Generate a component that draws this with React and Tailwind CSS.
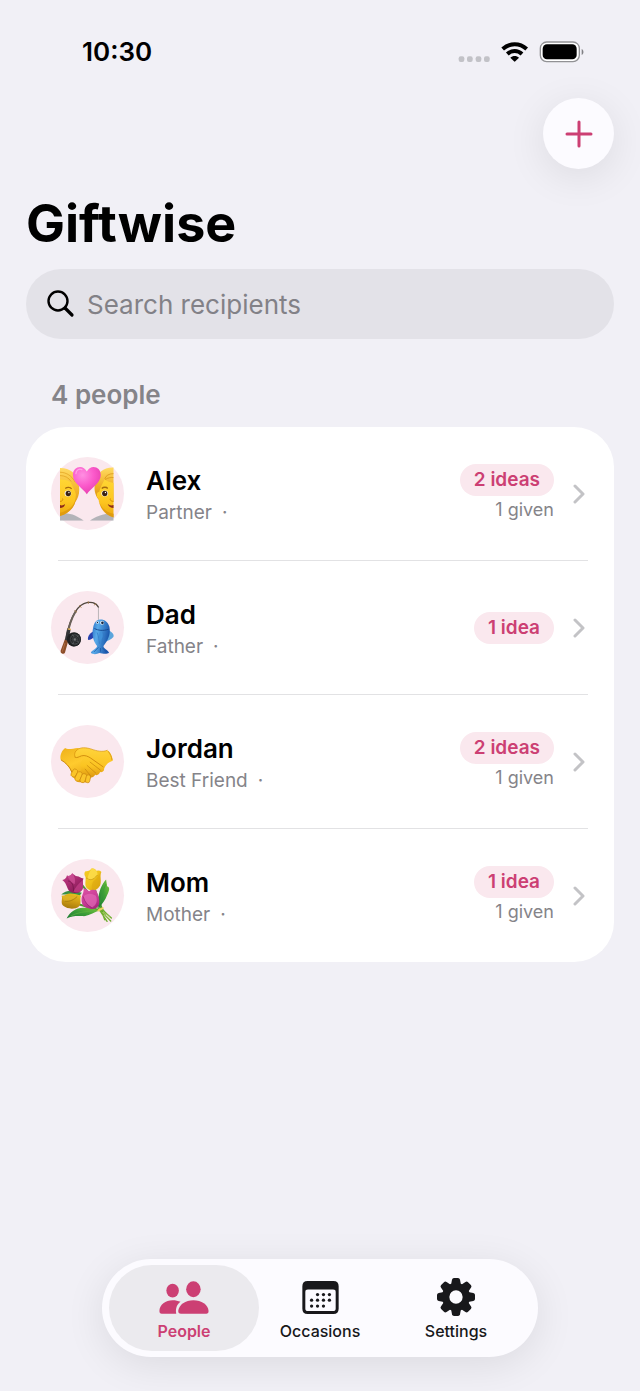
import React, { useState } from 'react';

const CoupleIcon = () => (
  <svg viewBox="33 36 220 220" className="size-full" aria-hidden="true">
    <defs>
      <linearGradient id="couple-skin" x1="0" y1="0" x2="0" y2="1">
        <stop offset="0" stopColor="#ffd634" />
        <stop offset="0.6" stopColor="#fdc51f" />
        <stop offset="1" stopColor="#e9a50f" />
      </linearGradient>
      <linearGradient id="couple-hair" x1="0" y1="0" x2="0" y2="1">
        <stop offset="0" stopColor="#ffdb62" />
        <stop offset="0.5" stopColor="#f2b32a" />
        <stop offset="1" stopColor="#d58d0d" />
      </linearGradient>
      <radialGradient id="couple-heart" cx="0.35" cy="0.3" r="0.8">
        <stop offset="0" stopColor="#ff8fe2" />
        <stop offset="0.5" stopColor="#fb5acb" />
        <stop offset="1" stopColor="#e43cab" />
      </radialGradient>
      <clipPath id="couple-clip">
        <rect x="60" y="60" width="162" height="168" />
      </clipPath>
    </defs>
    <g clipPath="url(#couple-clip)">
      <path d="M60 208 C85 200 112 214 132 228 H60 Z" fill="#b3b3b8" />
      <path d="M150 228 C166 216 186 206 222 206 V228 Z" fill="#b3b3b8" />
      <path d="M60 69 C88 68 110 84 114 112 C122 132 118 158 106 172 C100 190 84 206 60 209 Z" fill="url(#couple-hair)" />
      <path d="M60 104 C74 104 84 106 92 112 C98 124 104 134 108 148 C108 182 90 206 60 214 Z" fill="url(#couple-skin)" />
      <path d="M60 82 C78 82 96 92 106 112 M60 92 C74 92 86 98 94 110" stroke="#dd9d1b" strokeWidth="2" fill="none" />
      <path d="M60 214 C90 206 106 186 108 160 C102 184 86 198 60 204 Z" fill="#dc960c" opacity="0.7" />
      <path d="M222 68 C194 66 170 84 166 112 C162 130 164 148 176 164 L222 170 Z" fill="url(#couple-hair)" />
      <path d="M222 114 C208 112 200 108 195 103 C190 114 182 126 178 142 C170 140 168 156 176 162 C180 190 198 212 222 218 Z" fill="url(#couple-skin)" />
      <path d="M195 102 C198 92 208 86 222 86 M196 104 C206 98 214 97 222 98" stroke="#d18c14" strokeWidth="2" fill="none" />
      <path d="M222 218 C196 212 180 190 176 164 C182 188 198 202 222 208 Z" fill="#dc960c" opacity="0.7" />
      <path d="M76 131 C82 126 91 127 95 132" stroke="#a56a10" strokeWidth="4" fill="none" />
      <path d="M186 131 C191 126 200 126 204 131" stroke="#a56a10" strokeWidth="4" fill="none" />
      <ellipse cx="84" cy="146" rx="10" ry="9" fill="#fff" />
      <ellipse cx="195" cy="146" rx="10" ry="9" fill="#fff" />
      <circle cx="85" cy="146" r="8" fill="#3b2313" />
      <circle cx="195" cy="146" r="8" fill="#3b2313" />
      <circle cx="87" cy="143" r="2" fill="#fff" />
      <circle cx="197" cy="143" r="2" fill="#fff" />
      <path d="M60 170 C66 170 70 166 68 161" stroke="#d68d0c" strokeWidth="3" fill="none" />
      <path d="M222 170 C214 170 210 166 212 161" stroke="#d68d0c" strokeWidth="3" fill="none" />
      <path d="M60 181 C66 183 71 182 75 178 C75 186 68 190 60 190 Z" fill="#8c2a1b" />
      <path d="M222 181 C214 183 209 182 204 178 C206 186 214 190 222 190 Z" fill="#8c2a1b" />
    </g>
    <path d="M141 148 C130 130 99 116 99 90 C99 62 132 58 141 80 C150 58 183 62 183 90 C183 116 152 130 141 148 Z" fill="url(#couple-heart)" />
    <path d="M108 86 C109 75 118 70 126 74" stroke="#ffc4f1" strokeWidth="4" strokeLinecap="round" fill="none" opacity="0.6" />
  </svg>
);

const FishingIcon = () => (
  <svg viewBox="33 33 220 220" className="size-full" aria-hidden="true">
    <defs>
      <linearGradient id="fish-body" x1="0" y1="0" x2="1" y2="0.3">
        <stop offset="0" stopColor="#1f62bd" />
        <stop offset="0.4" stopColor="#58aae9" />
        <stop offset="1" stopColor="#1b58ad" />
      </linearGradient>
      <radialGradient id="reel">
        <stop offset="0" stopColor="#8b8d8e" />
        <stop offset="0.3" stopColor="#303336" />
        <stop offset="0.65" stopColor="#484c4f" />
        <stop offset="1" stopColor="#151719" />
      </radialGradient>
    </defs>
    <path d="M78 180 C84 138 104 82 132 71 C152 63 169 68 176 82" stroke="#51483f" strokeWidth="4" fill="none" strokeLinecap="round" />
    <path d="M81 172 C86 140 96 112 108 93" stroke="#6b625a" strokeWidth="6" fill="none" />
    <path d="M104 92 l7 5 M119 76 l5 7 M145 64 l1 7 M168 70 l-4 6" stroke="#9c7440" strokeWidth="3" />
    <path d="M176 82 V120" stroke="#999b9c" strokeWidth="2" />
    <path d="M75 178 L86 180 L75 219 Q72 224 66 221 Q61 219 62 213 Z" fill="#8c4d28" />
    <path d="M75 190 l-8 26" stroke="#ad6a43" strokeWidth="3" />
    <path d="M82 145 L92 149 L86 184 L75 180 Z" fill="#34363a" />
    <path d="M83 147 l10 2" stroke="#e5b452" strokeWidth="4" />
    <ellipse cx="102" cy="179" rx="21" ry="22" fill="#202224" />
    <ellipse cx="105" cy="179" rx="18" ry="20" fill="url(#reel)" />
    <circle cx="105" cy="179" r="11" fill="none" stroke="#202123" strokeWidth="3" />
    <path d="M97 164 l5 7 M115 167 l-4 5 M117 188 l-5 -4 M98 193 l3 -6" stroke="#6d7173" strokeWidth="2" />
    <path d="M166 151 C153 158 141 168 145 181 C152 181 161 174 168 168 Z" fill="#2842ae" />
    <path d="M200 149 C216 154 225 164 221 172 C214 181 205 183 195 187 Z" fill="#5ba5dc" />
    <path d="M180 119 C194 118 205 126 209 141 C214 167 202 185 191 199 C191 207 204 211 208 219 C200 225 187 221 179 220 C170 224 160 225 153 219 C158 210 171 207 172 199 C161 185 155 166 160 143 C163 128 170 120 180 119 Z" fill="url(#fish-body)" />
    <path d="M164 146 C175 152 190 154 207 148" stroke="#174b92" strokeWidth="3" fill="none" />
    <path d="M172 158 C177 170 178 182 179 192 M190 158 C191 170 189 181 186 194" stroke="#2f78c4" strokeWidth="2" fill="none" />
    <path d="M184 153 C177 163 175 173 180 184 C189 177 192 164 184 153 Z" fill="#3f90d8" />
    <circle cx="173" cy="128" r="4" fill="#e9f3fa" />
    <circle cx="187" cy="129" r="6" fill="#e9f3fa" />
    <circle cx="188" cy="129" r="4" fill="#182744" />
    <circle cx="173" cy="128" r="2" fill="#182744" />
    <path d="M176 203 l-14 14 M182 205 v11 M188 204 l12 13" stroke="#174f9e" strokeWidth="2" />
  </svg>
);

const HandshakeIcon = () => (
  <svg viewBox="33 28 220 220" className="size-full" aria-hidden="true">
    <defs>
      <linearGradient id="hand-left" x1="0" y1="0" x2="0.5" y2="1">
        <stop offset="0" stopColor="#eeb01b" />
        <stop offset="0.5" stopColor="#ffcb2e" />
        <stop offset="1" stopColor="#e7a312" />
      </linearGradient>
      <linearGradient id="hand-right" x1="0" y1="0" x2="0" y2="1">
        <stop offset="0" stopColor="#ffd43c" />
        <stop offset="0.6" stopColor="#fbc421" />
        <stop offset="1" stopColor="#dc9610" />
      </linearGradient>
    </defs>
    <path d="M76 97 C82 103 98 99 114 97 L152 112 L176 156 L146 196 C140 203 132 202 127 199 C115 203 108 199 105 190 C97 187 93 180 95 172 C90 158 82 146 62 132 C59 120 66 103 76 97 Z" fill="url(#hand-left)" />
    <path d="M203 104 C211 108 219 123 219 136 C204 141 197 149 193 160 C194 167 188 171 181 170 C178 178 172 181 166 178 C161 187 154 188 148 184 C143 190 136 188 131 181 C123 179 119 168 126 160 C116 151 124 134 133 125 C124 121 117 125 112 128 C104 125 103 112 112 103 C121 94 140 96 153 100 C172 107 189 110 203 104 Z" fill="url(#hand-right)" />
    <path d="M105 125 C111 129 118 123 125 121 C135 118 146 123 153 128 L190 154" fill="none" stroke="#d28d0e" strokeWidth="3" strokeLinecap="round" />
    <path d="M151 140 L182 164 M142 150 L168 173 M136 161 L153 182" fill="none" stroke="#c4820c" strokeWidth="2" strokeLinecap="round" />
    <path d="M105 124 C102 115 106 106 112 103 C121 94 140 96 153 100 C172 107 189 110 203 104" fill="none" stroke="#d6920f" strokeWidth="2" />
    <g fill="#fac52a" stroke="#cc870f" strokeWidth="2">
      <rect x="96" y="160" width="15" height="25" rx="7" transform="rotate(28 103 172)" />
      <rect x="108" y="168" width="16" height="30" rx="8" transform="rotate(26 116 183)" />
      <rect x="123" y="174" width="15" height="28" rx="7" transform="rotate(22 130 188)" />
      <rect x="138" y="178" width="13" height="24" rx="6" transform="rotate(12 144 190)" />
    </g>
    <path d="M63 133 C78 142 90 154 96 170" fill="none" stroke="#c98511" strokeWidth="3" />
    <path d="M205 107 C211 114 216 124 217 134" fill="none" stroke="#dc9a15" strokeWidth="3" />
  </svg>
);

const BouquetIcon = () => (
  <svg viewBox="33 30 220 220" className="size-full" aria-hidden="true">
    <defs>
      <linearGradient id="tulip-yellow" x1="0" y1="0" x2="1" y2="1">
        <stop offset="0" stopColor="#f3cb25" />
        <stop offset="0.5" stopColor="#efc21c" />
        <stop offset="1" stopColor="#cf9c0a" />
      </linearGradient>
      <linearGradient id="tulip-gold" x1="0.6" y1="0" x2="0.3" y2="1">
        <stop offset="0" stopColor="#e9c020" />
        <stop offset="0.5" stopColor="#cd9b14" />
        <stop offset="1" stopColor="#a4780b" />
      </linearGradient>
      <linearGradient id="tulip-plum" x1="0" y1="0" x2="0.7" y2="1">
        <stop offset="0" stopColor="#c03c86" />
        <stop offset="0.5" stopColor="#a92a70" />
        <stop offset="1" stopColor="#831b55" />
      </linearGradient>
      <linearGradient id="tulip-pink" x1="0.4" y1="0" x2="0.8" y2="1">
        <stop offset="0" stopColor="#d94fa2" />
        <stop offset="0.6" stopColor="#c43894" />
        <stop offset="1" stopColor="#a3257a" />
      </linearGradient>
      <linearGradient id="tulip-leaf" x1="0" y1="1" x2="1" y2="0">
        <stop offset="0" stopColor="#1c7a34" />
        <stop offset="0.5" stopColor="#3c9d38" />
        <stop offset="1" stopColor="#7cc93a" />
      </linearGradient>
    </defs>
    <path d="M128 110 L199 196 M165 122 L190 190 M110 165 L190 187" stroke="#4d9c30" strokeWidth="6" fill="none" />
    <path d="M175 156 C176 132 185 106 199 92 C200 101 202 106 202 112 C211 115 210 124 202 139 C197 154 187 164 176 180 Z" fill="url(#tulip-leaf)" />
    <path d="M181 162 C185 142 191 123 198 106" stroke="#3c963a" strokeWidth="2" fill="none" />
    <path d="M64 137 C76 123 99 122 126 132 L118 142 C99 134 82 138 64 137 Z" fill="#3a8f43" />
    <path d="M80 209 C91 187 112 174 137 177 C153 178 167 181 178 186 C156 193 142 204 128 202 C113 201 96 201 80 209 Z" fill="url(#tulip-leaf)" />
    <path d="M92 202 C112 191 137 188 165 186" stroke="#5fb341" strokeWidth="2" fill="none" />
    {/* Plum tulip */}
    <path d="M67 93 C75 93 79 87 81 80 C87 83 92 80 97 73 C102 76 106 82 112 82 C118 82 122 87 131 89 C126 96 133 110 128 121 C121 133 103 136 91 129 C79 119 83 105 67 93 Z" fill="url(#tulip-plum)" />
    <path d="M97 73 C106 84 107 95 104 106 C97 102 88 95 81 80 C87 83 92 80 97 73 Z" fill="#d2559b" opacity="0.7" />
    <path d="M131 89 C124 101 112 105 101 128 C110 134 122 131 128 121 C133 110 126 96 131 89 Z" fill="#c8418c" opacity="0.7" />
    <path d="M84 96 C96 98 101 108 101 127" stroke="#701648" strokeWidth="2" fill="none" />
    {/* Yellow tulip */}
    <path d="M137 67 C145 68 151 64 156 58 C163 58 168 62 171 66 C176 64 181 65 185 69 C179 79 186 95 181 110 C174 124 157 129 145 121 C131 112 139 97 137 84 C132 77 133 71 137 67 Z" fill="url(#tulip-yellow)" />
    <path d="M156 58 C166 60 173 66 173 76 C168 91 158 94 143 93 C143 82 149 69 156 58 Z" fill="#ffe255" opacity="0.7" />
    <path d="M139 87 C150 95 160 95 173 78" stroke="#bd8b08" strokeWidth="2" fill="none" />
    <path d="M161 96 C156 105 155 113 157 122 C168 121 178 114 181 106 C184 91 178 80 183 72 C177 74 174 88 161 96 Z" fill="#dda910" opacity="0.6" />
    {/* Gold tulip */}
    <path d="M65 141 C74 142 80 134 91 134 C102 135 116 137 124 141 C118 151 127 162 117 173 C106 183 82 181 71 172 C60 163 69 151 65 141 Z" fill="url(#tulip-gold)" />
    <path d="M65 141 C84 140 96 145 111 143 C104 152 94 157 74 157 C68 152 69 145 65 141 Z" fill="#e4b92b" opacity="0.6" />
    <path d="M74 157 C92 159 102 152 112 143" stroke="#987008" strokeWidth="2" fill="none" />
    {/* Pink tulip */}
    <path d="M131 119 C139 118 142 124 148 127 C155 121 163 122 170 125 C173 136 181 153 178 166 C174 180 157 184 144 178 C132 175 124 166 125 151 C125 140 133 131 131 119 Z" fill="url(#tulip-pink)" />
    <path d="M131 143 C141 132 155 132 168 141 C174 153 171 169 157 176 C145 170 134 158 131 143 Z" fill="#e26bb7" opacity="0.7" />
    <path d="M130 143 C134 160 145 172 157 178" stroke="#9b2475" strokeWidth="2" fill="none" />
    <path d="M174 177 L213 217 M177 180 L202 218 M181 178 L215 208 M184 184 L195 213" stroke="#6eae2f" strokeWidth="4" strokeLinecap="round" fill="none" />
    <path d="M176 185 L189 178" stroke="#edd265" strokeWidth="6" strokeLinecap="round" />
    <path d="M188 190 L208 214 M190 188 L211 206" stroke="#b7d562" strokeWidth="2" />
  </svg>
);

const StatusIcons = () => (
  <svg viewBox="55 62 378 66" className="w-[126px] h-[22px]" aria-hidden="true">
    <g fill="#c2c2c7">
      <rect x="57" y="108" width="17" height="17" rx="6" />
      <rect x="82" y="108" width="17" height="17" rx="6" />
      <rect x="108" y="108" width="17" height="17" rx="6" />
      <rect x="133" y="108" width="17" height="17" rx="6" />
    </g>
    <g fill="none" stroke="#000" strokeWidth="12">
      <path d="M189 86 C210 67 240 67 261 86" />
      <path d="M203 101 C216 89 234 89 247 101" />
    </g>
    <path d="M212 112 C219 105 231 105 238 112 L227 123 Q225 125 223 123 Z" fill="#000" />
    <rect x="302" y="65" width="117" height="59" rx="19" fill="#fff" stroke="#929295" strokeWidth="4" />
    <rect x="309" y="72" width="102" height="45" rx="13" fill="#000" />
    <path d="M426 86 C433 89 433 101 426 104 Z" fill="#808084" />
  </svg>
);

const PeopleIcon = () => (
  <svg viewBox="206 106 151 100" className="w-[50px] h-[33px]" fill="currentColor" aria-hidden="true">
    <ellipse cx="247" cy="135" rx="19" ry="21" />
    <ellipse cx="310" cy="131" rx="22" ry="24" />
    <path d="M214 205 Q207 205 207 197 C207 177 226 164 247 164 C256 164 264 166 271 169 C260 177 255 190 258 205 Z" />
    <path d="M272 205 Q264 205 264 197 C266 177 286 164 310 164 C334 164 355 177 356 197 Q356 205 349 205 Z" />
  </svg>
);

const CalendarIcon = () => (
  <svg viewBox="637 105 110 100" className="w-[37px] h-[33px]" fill="currentColor" aria-hidden="true">
    <path
      fillRule="evenodd"
      d="M653 105 H731 Q747 105 747 121 V189 Q747 205 731 205 H653 Q637 205 637 189 V121 Q637 105 653 105 Z M654 131 Q646 131 646 138 V188 Q646 196 654 196 H730 Q738 196 738 188 V138 Q738 131 730 131 Z"
    />
    <circle cx="683" cy="146" r="5" />
    <circle cx="701" cy="146" r="5" />
    <circle cx="719" cy="146" r="5" />
    <circle cx="665" cy="163" r="5" />
    <circle cx="683" cy="163" r="5" />
    <circle cx="701" cy="163" r="5" />
    <circle cx="719" cy="163" r="5" />
    <circle cx="665" cy="181" r="5" />
    <circle cx="683" cy="181" r="5" />
    <circle cx="701" cy="181" r="5" />
  </svg>
);

const GearIcon = () => (
  <svg viewBox="-57 -57 114 114" className="size-[38px]" fill="currentColor" aria-hidden="true">
    <circle r="31" fill="none" stroke="currentColor" strokeWidth="22" />
    {[0, 45, 90, 135, 180, 225, 270, 315].map((angle) => (
      <path
        key={angle}
        transform={`rotate(${angle})`}
        d="M-15 -36 L-12 -52 Q-11 -57 -6 -57 H6 Q11 -57 12 -52 L15 -36 Z"
      />
    ))}
  </svg>
);

const people = [
  { name: 'Alex', relation: 'Partner', ideas: '2 ideas', given: '1 given', Icon: CoupleIcon },
  { name: 'Dad', relation: 'Father', ideas: '1 idea', given: null, Icon: FishingIcon },
  { name: 'Jordan', relation: 'Best Friend', ideas: '2 ideas', given: '1 given', Icon: HandshakeIcon },
  { name: 'Mom', relation: 'Mother', ideas: '1 idea', given: '1 given', Icon: BouquetIcon },
];

const tabs = [
  { name: 'People', Icon: PeopleIcon },
  { name: 'Occasions', Icon: CalendarIcon },
  { name: 'Settings', Icon: GearIcon },
];

const App = () => {
  const [query, setQuery] = useState('');
  const [activeTab, setActiveTab] = useState('People');

  const visiblePeople = people.filter((person) =>
    person.name.toLowerCase().includes(query.toLowerCase())
  );

  return (
    <div className="min-h-screen flex flex-col bg-[#f1f0f6] text-black font-['Inter',sans-serif]">
      {/* Status bar */}
      <div className="flex items-center justify-between pt-8 pr-14 pl-[82px]">
        <span className="text-[26px] leading-10 font-semibold">10:30</span>
        <StatusIcons />
      </div>

      {/* Header */}
      <header className="px-[26px] pt-[26px]">
        <div className="flex justify-end">
          <button
            type="button"
            aria-label="Add recipient"
            className="size-[71px] flex items-center justify-center rounded-full bg-[#fcfbff] text-[#cc3f73] shadow-[0_8px_40px_rgba(0,0,0,0.09)]"
          >
            <svg viewBox="0 0 28 28" className="size-7" fill="none" stroke="currentColor" strokeWidth="3" strokeLinecap="round" aria-hidden="true">
              <path d="M14 2 V26 M2 14 H26" />
            </svg>
          </button>
        </div>
        <h1 className="mt-[25px] text-[52px] leading-[60px] font-bold">Giftwise</h1>
        <div className="mt-[15px] h-[70px] flex items-center gap-3 px-[21px] rounded-full bg-[#e3e2e8]">
          <svg viewBox="0 0 28 28" className="size-7 shrink-0" fill="none" stroke="#000" aria-hidden="true">
            <circle cx="11" cy="11" r="9.500" strokeWidth="2.400" />
            <path d="M18 18 L25 25" strokeWidth="3.200" strokeLinecap="round" />
          </svg>
          <input
            type="text"
            aria-label="Search recipients"
            value={query}
            onChange={(e) => setQuery(e.target.value)}
            placeholder="Search recipients"
            className="min-w-0 flex-1 h-11 bg-transparent text-[26px] outline-none placeholder:text-[#828187]"
          />
        </div>
      </header>

      {/* People list */}
      <main className="px-[26px] pt-9 pb-10">
        <h2 className="px-[25px] text-[26px] leading-10 font-semibold text-[#858489]">
          {visiblePeople.length} people
        </h2>
        <ul className="mt-3 rounded-[40px] bg-white">
          {visiblePeople.map(({ name, relation, ideas, given, Icon }, index) => (
            <li key={name}>
              {index > 0 && <div className="ml-8 mr-[26px] h-px bg-[#e2e2e4]" />}
              <a href={`#${name.toLowerCase()}`} className="h-[133px] flex items-center pl-[25px] pr-7">
                <span className="size-[73px] shrink-0 rounded-full bg-[#fae8ee]">
                  <Icon />
                </span>
                <span className="ml-[22px] flex-1 flex flex-col">
                  <span className="text-[26px] leading-[38px] font-semibold">{name}</span>
                  <span className="flex gap-[10px] text-[19px] leading-[26px] text-[#858489]">
                    <span>{relation}</span>
                    <span>·</span>
                  </span>
                </span>
                <span className="flex flex-col items-end">
                  <span className="px-[14px] rounded-full bg-[#fae8ee] text-[19px] leading-8 font-semibold text-[#cc3f73]">
                    {ideas}
                  </span>
                  {given && <span className="text-[18px] leading-7 text-[#858489]">{given}</span>}
                </span>
                <svg viewBox="0 0 14 20" className="ml-[18px] w-[14px] h-5" fill="none" stroke="#c3c3c6" strokeWidth="3" strokeLinecap="round" strokeLinejoin="round" aria-hidden="true">
                  <path d="M3 2 L11 10 L3 18" />
                </svg>
              </a>
            </li>
          ))}
        </ul>
      </main>

      {/* Tab bar */}
      <nav className="mt-auto mb-[34px] self-center flex rounded-full bg-[#fcfbff] px-[7px] py-[6px] shadow-[0_8px_40px_rgba(0,0,0,0.09)]">
        {tabs.map(({ name, Icon }) => (
          <button
            key={name}
            type="button"
            onClick={() => setActiveTab(name)}
            className={`w-[150px] h-[86px] -ml-[14px] first:ml-0 flex flex-col items-center rounded-full pt-[13px] ${
              activeTab === name ? 'bg-[#ebeaee] text-[#cc3f73] font-semibold' : 'text-[#18181b] font-medium'
            }`}
          >
            <span className="h-[38px] flex items-center">
              <Icon />
            </span>
            <span className="mt-[5px] text-[16px] leading-5">{name}</span>
          </button>
        ))}
      </nav>
    </div>
  );
};

export default App;
